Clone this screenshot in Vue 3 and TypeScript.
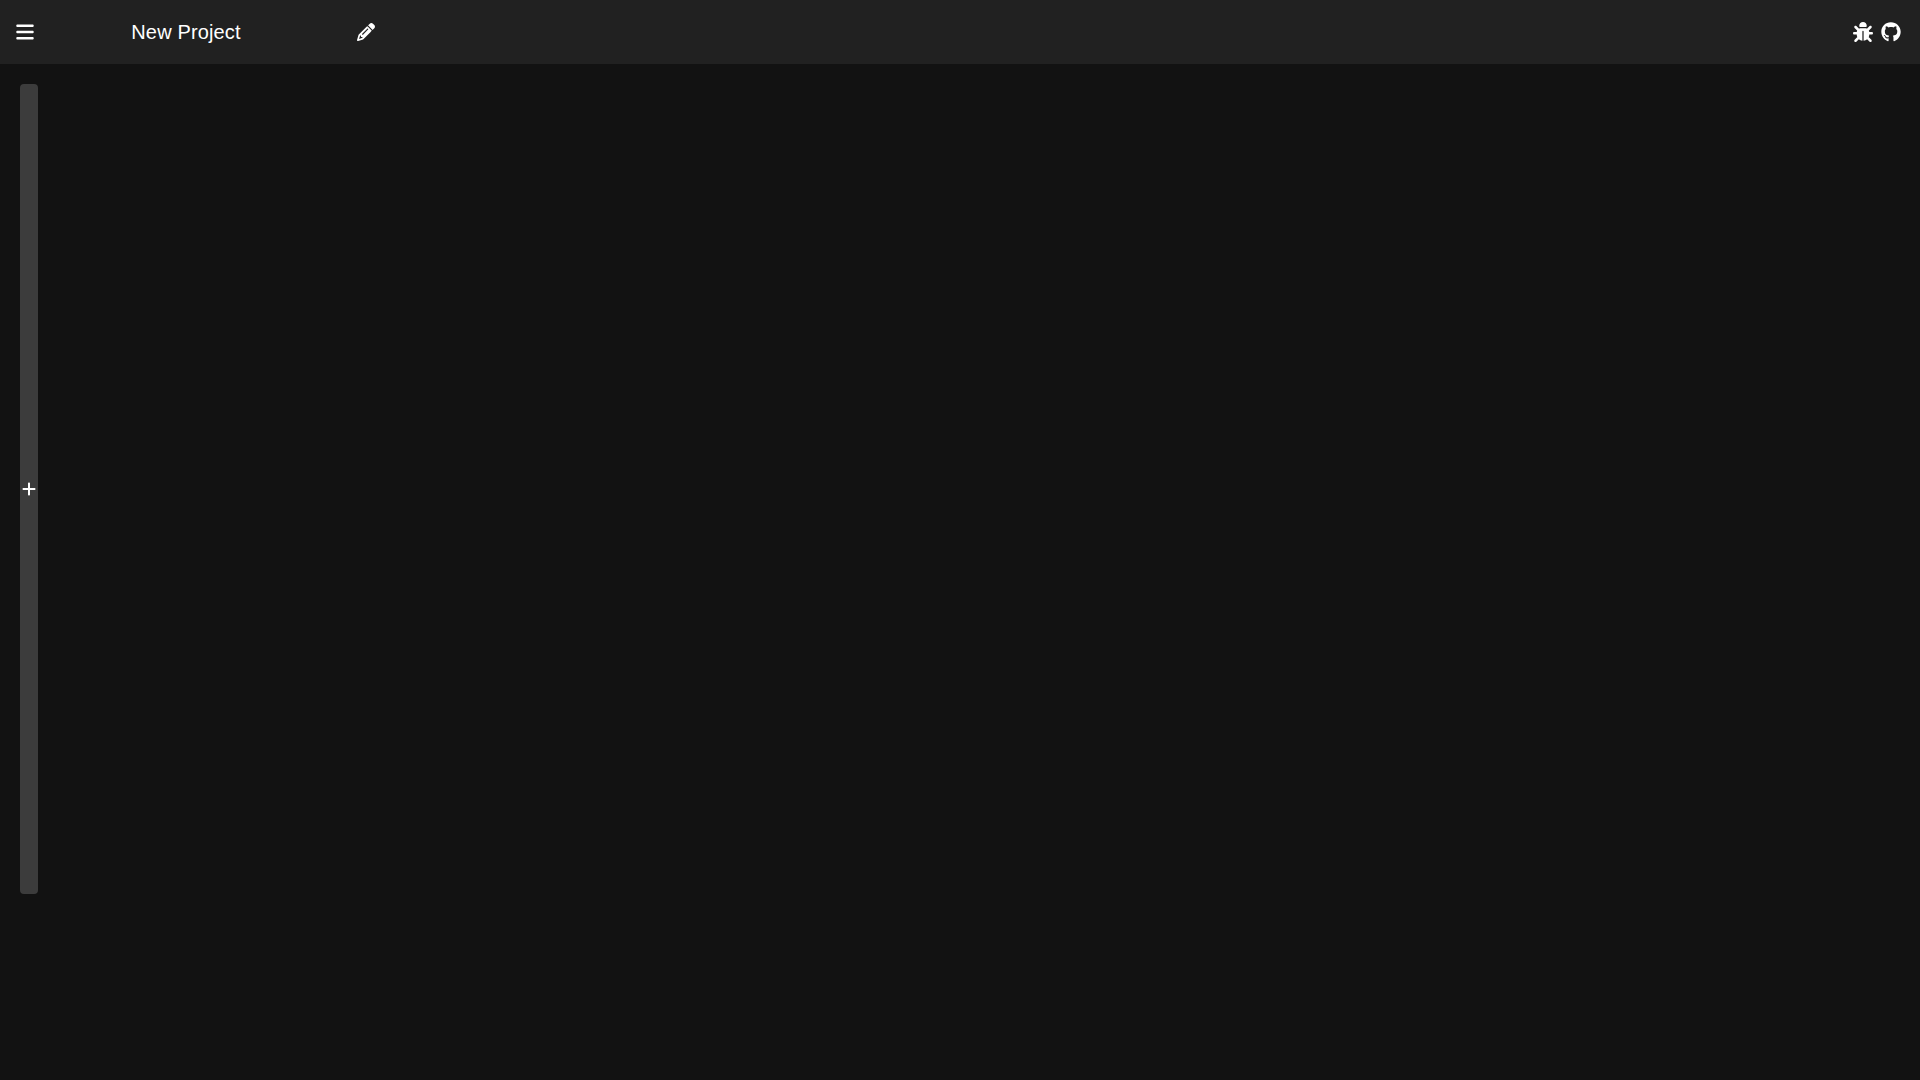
<script setup lang="ts">
import { ref, nextTick } from 'vue'

const projectName = ref<string>('New Project')
const editing = ref<boolean>(false)
const nameInput = ref<HTMLInputElement | null>(null)

async function editName(): Promise<void> {
  editing.value = true
  await nextTick()
  nameInput.value?.select()
}
</script>

<template>
  <div class="app">
    <header class="toolbar">
      <button class="icon-button" type="button" aria-label="Open menu">
        <svg class="icon menu" viewBox="0 0 448 512" aria-hidden="true">
          <path d="M0 96C0 78.3 14.3 64 32 64H416c17.7 0 32 14.3 32 32s-14.3 32-32 32H32C14.3 128 0 113.7 0 96zM0 256c0-17.7 14.3-32 32-32H416c17.7 0 32 14.3 32 32s-14.3 32-32 32H32c-17.7 0-32-14.3-32-32zM448 416c0 17.7-14.3 32-32 32H32c-17.7 0-32-14.3-32-32s14.3-32 32-32H416c17.7 0 32 14.3 32 32z" />
        </svg>
      </button>
      <div class="project">
        <input
          v-if="editing"
          ref="nameInput"
          v-model="projectName"
          class="name"
          aria-label="Project name"
          @blur="editing = false"
          @keyup.enter="editing = false"
        />
        <h1 v-else class="name">{{ projectName }}</h1>
      </div>
      <button class="icon-button" type="button" aria-label="Edit project name" @click="editName">
        <svg class="icon pencil" viewBox="0 0 512 512" aria-hidden="true">
          <path d="M410.3 231l11.3-11.3-33.9-33.9-62.1-62.1L291.7 89.8l-11.3 11.3-22.6 22.6L58.6 322.9c-10.4 10.4-18 23.3-22.2 37.4L1 480.7c-2.5 8.4-.2 17.5 6.1 23.7s15.3 8.5 23.7 6.1l120.3-35.4c14.1-4.2 27-11.8 37.4-22.2L387.7 253.7 410.3 231zM160 399.4l-9.1 22.7c-4 3.1-8.5 5.4-13.3 6.9L59.4 452l23-78.1c1.4-4.9 3.8-9.4 6.9-13.3l22.7-9.1v32c0 8.8 7.2 16 16 16h32zM362.7 18.7L348.3 33.2 325.7 55.8 314.3 67.1l33.9 33.9 62.1 62.1 33.9 33.9 11.3-11.3 22.6-22.6 14.5-14.5c25-25 25-65.5 0-90.5L453.3 18.7c-25-25-65.5-25-90.5 0zm-47.4 168l-144 144c-6.2 6.2-16.4 6.2-22.6 0s-6.2-16.4 0-22.6l144-144c6.2-6.2 16.4-6.2 22.6 0s6.2 16.4 0 22.6z" />
        </svg>
      </button>
      <nav class="links" aria-label="Project links">
        <a class="link" href="#issues" aria-label="Report a bug">
          <svg class="icon brand" viewBox="0 0 512 512" aria-hidden="true">
            <path d="M256 0c53 0 96 43 96 96v3.6c0 15.7-12.7 28.4-28.4 28.4H188.4c-15.7 0-28.4-12.7-28.4-28.4V96c0-53 43-96 96-96zM41.4 105.4c12.5-12.5 32.8-12.5 45.3 0l64 64c.7 .7 1.3 1.4 1.9 2.1c14.2-7.3 30.4-11.4 47.5-11.4H312c17.1 0 33.2 4.1 47.5 11.4c.6-.7 1.2-1.4 1.9-2.1l64-64c12.5-12.5 32.8-12.5 45.3 0s12.5 32.8 0 45.3l-64 64c-.7 .7-1.4 1.3-2.1 1.9c6.2 12 10.1 25.3 11.1 39.5H480c17.7 0 32 14.3 32 32s-14.3 32-32 32H416c0 24.6-5.5 47.8-15.4 68.6c2.2 1.3 4.2 2.9 6 4.8l64 64c12.5 12.5 12.5 32.8 0 45.3s-32.8 12.5-45.3 0l-63.1-63.1c-24.5 21.8-55.8 36.2-90.3 39.6V240c0-8.8-7.2-16-16-16s-16 7.2-16 16V479.2c-34.5-3.4-65.8-17.8-90.3-39.6L86.6 502.6c-12.5 12.5-32.8 12.5-45.3 0s-12.5-32.8 0-45.3l64-64c1.9-1.9 3.9-3.4 6-4.8C101.5 367.8 96 344.6 96 320H32c-17.7 0-32-14.3-32-32s14.3-32 32-32H96.3c1.1-14.1 5-27.5 11.1-39.5c-.7-.6-1.4-1.2-2.1-1.9l-64-64c-12.5-12.5-12.5-32.8 0-45.3z" />
          </svg>
        </a>
        <a class="link" href="#source" aria-label="Source on GitHub">
          <svg class="icon brand" viewBox="0 0 496 512" aria-hidden="true">
            <path d="M165.9 397.4c0 2-2.3 3.6-5.2 3.6-3.3.3-5.6-1.3-5.6-3.6 0-2 2.3-3.6 5.2-3.6 3-.3 5.6 1.3 5.6 3.6zm-31.1-4.5c-.7 2 1.3 4.3 4.3 4.9 2.6 1 5.6 0 6.2-2s-1.3-4.3-4.3-5.2c-2.6-.7-5.5.3-6.2 2.3zm44.2-1.7c-2.9.7-4.9 2.6-4.6 4.9.3 2 2.9 3.3 5.9 2.6 2.9-.7 4.9-2.6 4.6-4.6-.3-1.9-3-3.2-5.9-2.9zM244.8 8C106.1 8 0 113.3 0 252c0 110.9 69.8 205.8 169.5 239.2 12.8 2.3 17.3-5.6 17.3-12.1 0-6.2-.3-40.4-.3-61.4 0 0-70 15-84.7-29.8 0 0-11.4-29.1-27.8-36.6 0 0-22.9-15.7 1.6-15.4 0 0 24.9 2 38.6 25.8 21.9 38.6 58.6 27.5 72.9 20.9 2.3-16 8.8-27.1 16-33.7-55.9-6.2-112.3-14.3-112.3-110.5 0-27.5 7.6-41.3 23.6-58.9-2.6-6.5-11.1-33.3 2.6-67.9 20.9-6.5 69 27 69 27 20-5.6 41.5-8.5 62.8-8.5s42.8 2.9 62.8 8.5c0 0 48.1-33.6 69-27 13.7 34.7 5.2 61.4 2.6 67.9 16 17.7 25.8 31.5 25.8 58.9 0 96.5-58.9 104.2-114.8 110.5 9.2 7.9 17 22.9 17 46.4 0 33.7-.3 75.4-.3 83.6 0 6.5 4.6 14.4 17.3 12.1C428.2 457.8 496 362.9 496 252 496 113.3 383.5 8 244.8 8zM97.2 352.9c-1.3 1-1 3.3.7 5.2 1.6 1.6 3.9 2.3 5.2 1 1.3-1 1-3.3-.7-5.2-1.6-1.6-3.9-2.3-5.2-1zm-10.8-8.1c-.7 1.3.3 2.9 2.3 3.9 1.6 1 3.6.7 4.3-.7.7-1.3-.3-2.9-2.3-3.9-2-.6-3.6-.3-4.3.7zm32.4 35.6c-1.6 1.3-1 4.3 1.3 6.2 2.3 2.3 5.2 2.6 6.5 1 1.3-1.3.7-4.3-1.3-6.2-2.2-2.3-5.2-2.6-6.5-1zm-11.4-14.7c-1.6 1-1.6 3.6 0 5.9 1.6 2.3 4.3 3.3 5.6 2.3 1.6-1.3 1.6-3.9 0-6.2-1.4-2.3-4-3.3-5.6-2z" />
          </svg>
        </a>
      </nav>
    </header>
    <main class="board">
      <button class="add-column" type="button" aria-label="Add column">
        <svg class="icon plus" viewBox="0 0 448 512" aria-hidden="true">
          <path d="M256 80c0-17.7-14.3-32-32-32s-32 14.3-32 32V224H48c-17.7 0-32 14.3-32 32s14.3 32 32 32H192V432c0 17.7 14.3 32 32 32s32-14.3 32-32V288H400c17.7 0 32-14.3 32-32s-14.3-32-32-32H256V80z" />
        </svg>
      </button>
    </main>
  </div>
</template>

<style>
body {
  margin: 0;
  background: #121212;
}
</style>

<style scoped>
.app {
  display: flex;
  flex-direction: column;
  min-height: 100vh;
  color: #fff;
  font-family: "Liberation Sans", Arial, sans-serif;
}

.toolbar {
  display: flex;
  align-items: center;
  box-sizing: border-box;
  height: 64px;
  padding: 0 19px 0 16px;
  background: #212121;
}

.icon-button,
.add-column {
  display: flex;
  align-items: center;
  justify-content: center;
  padding: 0;
  border: 0;
  background: none;
  color: inherit;
  cursor: pointer;
}

.icon {
  display: block;
  fill: currentColor;
}

.menu {
  width: 18px;
  height: 20px;
}

.pencil {
  width: 18px;
  height: 18px;
}

.brand {
  width: 20px;
  height: 20px;
}

.plus {
  width: 14px;
  height: 16px;
}

.project {
  width: 300px;
  margin: 0 21px 0 2px;
}

.name {
  box-sizing: border-box;
  width: 100%;
  margin: 0;
  padding: 0;
  border: 0;
  outline: 0;
  background: none;
  color: inherit;
  font-family: inherit;
  font-size: 20px;
  font-weight: 400;
  line-height: 32px;
  letter-spacing: 0.0075em;
  text-align: center;
}

.links {
  display: flex;
  gap: 8px;
  margin-left: auto;
}

.link {
  color: inherit;
}

.board {
  display: flex;
  flex: 1;
  align-items: flex-start;
  padding: 20px;
}

.add-column {
  width: 18px;
  height: 75vh;
  border-radius: 4px;
  background: #3c3c3c;
}
</style>
